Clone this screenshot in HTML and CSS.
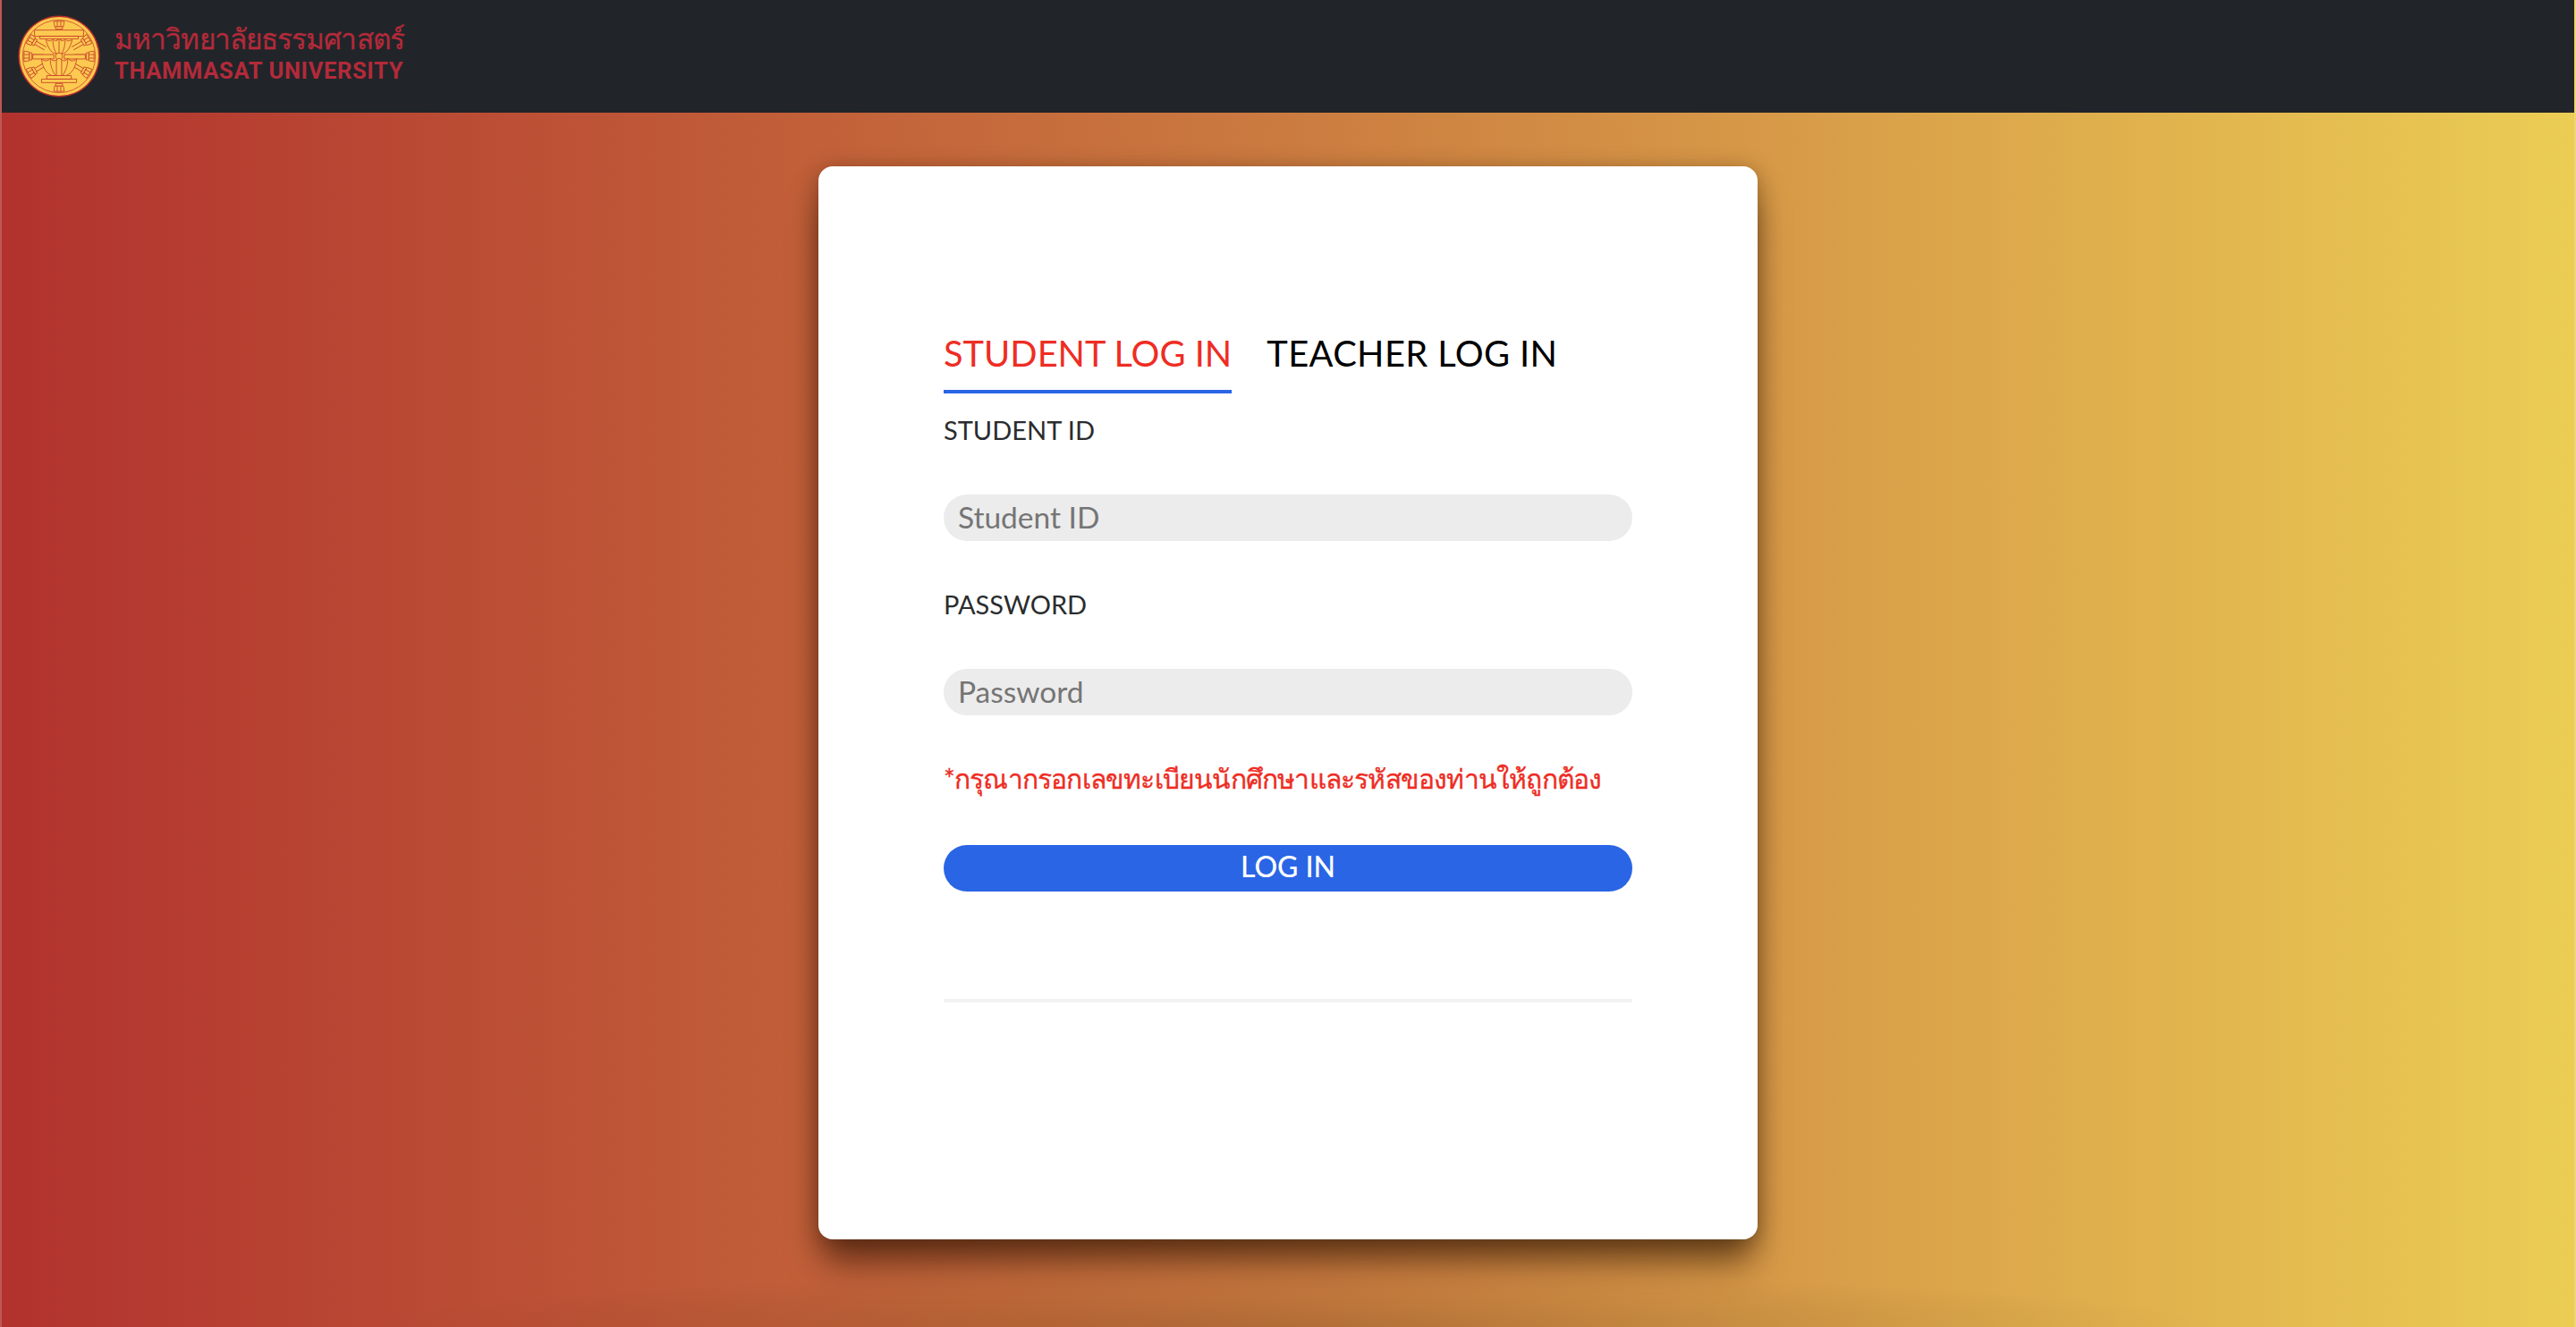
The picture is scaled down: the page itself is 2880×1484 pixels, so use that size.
FILE: index.html
```html
<!DOCTYPE html>
<html lang="th">
<head>
<meta charset="utf-8">
<title>Thammasat University Log In</title>
<link rel="stylesheet" href="styles.css">
</head>
<body>
<header class="navbar">
  <a class="brand" href="#">
    <svg class="seal" viewBox="-48 -48 96 96" aria-hidden="true">
      <defs>
        <g id="spoke">
          <path d="M-2 -18 L-2 -31 M2 -18 L2 -31"/>
          <path class="seal-fill" d="M-4 -31 H4 V-34 H-4Z"/>
          <path class="seal-fill" d="M-5 -34 H5 L6 -40 H-6Z"/>
          <path d="M-2 -34 V-40 M2 -34 V-40"/>
        </g>
      </defs>
      <circle class="seal-rim" r="46.5"/>
      <circle class="seal-face" r="45"/>
      <circle class="seal-line" r="41.5"/>
      <g class="seal-draw">
        <use href="#spoke" transform="rotate(60)"/>
        <use href="#spoke" transform="rotate(90)"/>
        <use href="#spoke" transform="rotate(120)"/>
        <use href="#spoke" transform="rotate(240)"/>
        <use href="#spoke" transform="rotate(270)"/>
        <use href="#spoke" transform="rotate(300)"/>
        <use href="#spoke" transform="rotate(0)"/>
        <use href="#spoke" transform="rotate(180)"/>
        <path class="seal-fill" d="M-28 -30 H28 V-23 H-28Z M-22 -23 H22 V-20 H-22Z"/>
        <path class="seal-fill" d="M-15 -19 C-13 -10 -9 -4 -4 -3 H4 C9 -4 13 -10 15 -19 C11 -17 9 -17 7 -20 C5 -17 3 -17 0 -20 C-3 -17 -5 -17 -7 -20 C-9 -17 -11 -17 -15 -19Z"/>
        <path d="M-7 -19 C-7 -12 -5 -6 -3 -3 M7 -19 C7 -12 5 -6 3 -3 M0 -19 V-3"/>
        <path class="seal-fill" d="M-30 -2 H-6 V3 H-30Z M6 -2 H30 V3 H6Z"/>
        <circle class="seal-fill" cx="0" cy="0" r="4"/>
        <path class="seal-fill" d="M-20 3 C-19 13 -14 20 -8 22 H8 C14 20 19 13 20 3 C16 6 13 6 10 2 C8 6 5 6 0 2 C-5 6 -8 6 -10 2 C-13 6 -16 6 -20 3Z"/>
        <path d="M-10 3 C-10 11 -7 18 -4 22 M10 3 C10 11 7 18 4 22 M-3 4 V22 M3 4 V22"/>
        <path class="seal-fill" d="M-14 22 H14 V26 H-14Z M-20 26 H20 V30 H-20Z"/>
      </g>
    </svg>
    <span class="brand-text">
      <span class="brand-th">มหาวิทยาลัยธรรมศาสตร์</span>
      <span class="brand-en">THAMMASAT UNIVERSITY</span>
    </span>
  </a>
</header>
<main class="stage">
  <section class="card">
    <nav class="tabs">
      <a class="tab tab-active" href="#">STUDENT LOG IN</a>
      <a class="tab tab-other" href="#">TEACHER LOG IN</a>
    </nav>
    <form class="form">
      <label class="label" for="sid">STUDENT ID</label>
      <input class="field" id="sid" type="text" placeholder="Student ID">
      <label class="label" for="pw">PASSWORD</label>
      <input class="field" id="pw" type="password" placeholder="Password">
      <p class="error">*กรุณากรอกเลขทะเบียนนักศึกษาและรหัสของท่านให้ถูกต้อง</p>
      <button class="submit" type="button">LOG IN</button>
    </form>
    <hr class="rule">
  </section>
</main>
</body>
</html>
```
FILE: styles.css
```css
* { box-sizing: border-box; }
html, body { margin: 0; height: 100%; }
body {
  height: 1484px;
  overflow: hidden;
  display: flex;
  flex-direction: column;
  font-family: "Lato", "Noto Sans", "Noto Sans CJK SC", sans-serif;
  background:
    radial-gradient(ellipse 1050px 60px at 50% 100%, rgba(40,30,0,.16), rgba(40,30,0,0)),
    linear-gradient(90deg, #b2322e 0%, #cb7b40 50%, #ebcd54 100%);
  border-left: 2px solid rgba(255,255,255,.18);
  border-right: 2px solid rgba(255,255,255,.18);
}
.navbar {
  height: 126px;
  flex: none;
  display: flex;
  align-items: center;
  padding-left: 19px;
  background: #212529;
  margin: 0 -2px;
}
.brand { display: flex; align-items: center; gap: 15px; text-decoration: none; }
.seal { width: 94px; height: 94px; display: block; }
.seal-rim { fill: #b92f2c; }
.seal-face { fill: #fcca50; }
.seal-line { fill: none; stroke: #c9452c; stroke-width: .8; }
.seal-draw { fill: none; stroke: #c9452c; stroke-width: .9; }
.seal-fill { fill: #fcca50; }
.brand-text { display: flex; flex-direction: column; color: #b32a3a; margin-top: -12px; }
.brand-th { font-size: 31.5px; line-height: 44px; letter-spacing: -.9px; -webkit-text-stroke: .3px #b32a3a; white-space: nowrap; }
.brand-en { font-family: "Roboto", sans-serif; font-size: 25.5px; line-height: 28px; font-weight: 700; letter-spacing: .65px; white-space: nowrap; }
.stage {
  flex: 1;
  display: flex;
  justify-content: center;
  padding-top: 60px;
}
.card {
  width: 1050px;
  height: 1200px;
  padding: 180px 140px 0;
  background: #fff;
  border-radius: 16px;
  box-shadow: 0 32px 38px -6px rgba(40,15,0,.56), 0 4px 24px rgba(40,20,0,.38);
}
.tabs { display: flex; gap: 39px; }
.tab {
  font-size: 39.8px;
  line-height: 58px;
  padding-bottom: 12px;
  border-bottom: 4px solid transparent;
  color: #000;
  text-decoration: none;
  white-space: nowrap;
}
.tab-other { letter-spacing: .4px; }
.tab-active { color: #ee2d24; border-bottom-color: #2a65e5; }
.form { display: flex; flex-direction: column; }
.label {
  margin-top: 21px;
  font-size: 29px;
  line-height: 40px;
  color: #2a2c2e;
}
.field {
  margin-top: 52px;
  height: 52px;
  width: 100%;
  padding: 0 16px 3px;
  border: 0;
  border-radius: 26px;
  background: #ececec;
  font: inherit;
  font-size: 33.5px;
  color: #212529;
}
.field::placeholder { color: #757575; opacity: 1; }
.field + .label { margin-top: 51px; }
.error {
  margin: 50px 0 2px;
  font-size: 30px;
  line-height: 40px;
  letter-spacing: -.8px;
  -webkit-text-stroke: .35px #ee2d24;
  color: #ee2d24;
  white-space: nowrap;
}
.submit {
  margin-top: 53px;
  height: 52px;
  width: 100%;
  border: 0;
  border-radius: 26px;
  background: #2a65e5;
  color: #fff;
  font: inherit;
  font-size: 32px;
  font-weight: 500;
  line-height: 48px;
  padding: 0 0 4px;
}
.rule {
  margin: 120px 0 0;
  height: 4px;
  border: 0;
  background: #f3f2f3;
}
```
